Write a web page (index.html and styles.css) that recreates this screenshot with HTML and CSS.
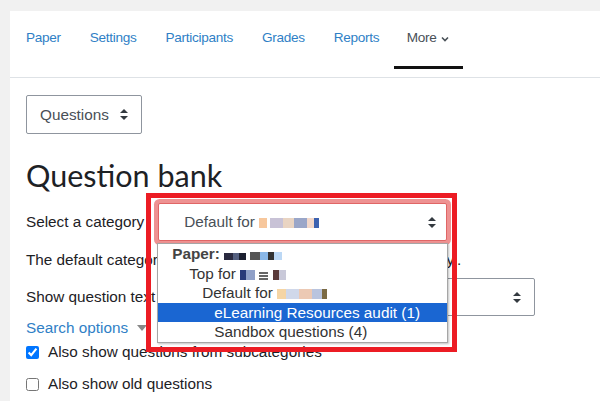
FILE: index.html
```html
<!DOCTYPE html>
<html lang="en">
<head>
  <meta charset="UTF-8">
  <title>Question bank</title>
  <link rel="stylesheet" href="styles.css">
</head>
<body>
  <div class="page">
    <nav class="tabs">
      <a class="tab" href="#">Paper</a>
      <a class="tab" href="#">Settings</a>
      <a class="tab" href="#">Participants</a>
      <a class="tab" href="#">Grades</a>
      <a class="tab" href="#">Reports</a>
      <a class="tab active" href="#">More
        <svg class="chev" width="8" height="6" viewBox="0 0 8 6"><path d="M1 1.5 L4 4.5 L7 1.5" fill="none" stroke="#495057" stroke-width="1.6"/></svg>
      </a>
    </nav>

    <div class="content">
      <div class="select jump">
        <span>Questions</span>
        <svg class="updown" width="8" height="11" viewBox="0 0 8 11"><path d="M4 0 L8 4 L0 4 Z M4 11 L8 7 L0 7 Z" fill="#343a40"/></svg>
      </div>

      <h2 class="title">Question bank</h2>

      <div class="row">
        <label class="label">Select a category</label>
        <div class="cat-wrap">
          <div class="select cat">
            <span>Default for <span class="blur b-sel"></span></span>
            <svg class="updown" width="8" height="11" viewBox="0 0 8 11"><path d="M4 0 L8 4 L0 4 Z M4 11 L8 7 L0 7 Z" fill="#343a40"/></svg>
          </div>
          <ul class="menu">
            <li class="group">Paper: <span class="blur b-p1"></span> <span class="blur b-p2"></span></li>
            <li class="lvl1">Top for <span class="blur b-t1"></span> <span class="blur b-t2"></span> <span class="blur b-t3"></span></li>
            <li class="lvl2">Default for <span class="blur b-d1"></span></li>
            <li class="lvl3 picked">eLearning Resources audit (1)</li>
            <li class="lvl3">Sandbox questions (4)</li>
          </ul>
          <div class="highlight"></div>
        </div>
      </div>

      <p class="note">The default category for questions shared in context 'Lewsandy'.</p>

      <div class="row show-row">
        <label class="label">Show question text in the question list</label>
        <div class="select show">
          <span>No</span>
          <svg class="updown" width="8" height="11" viewBox="0 0 8 11"><path d="M4 0 L8 4 L0 4 Z M4 11 L8 7 L0 7 Z" fill="#343a40"/></svg>
        </div>
      </div>

      <a class="search" href="#">Search options <span class="caret"></span></a>

      <label class="check first"><input type="checkbox" checked> Also show questions from subcategories</label>
      <label class="check"><input type="checkbox"> Also show old questions</label>
    </div>
  </div>
</body>
</html>
```

FILE: styles.css
```css
body {
  margin: 0;
  background-color: #f1f1f1;
  font-family: 'Liberation Sans', Arial, sans-serif;
  font-size: 15.3px;
  color: #1d2125;
  height: 401px;
  overflow: hidden;
}
.page {
  margin: 11px 0 0 10px;
  background: #fff;
  min-height: 390px;
}
.tabs {
  display: flex;
  padding: 0 0 8px 1.5px;
  border-bottom: 1px solid #dee2e6;
}
.tab {
  display: flex;
  align-items: center;
  gap: 4px;
  padding: 17px 14.5px 18px;
  line-height: 20px;
  font-size: 13.6px;
  letter-spacing: -0.3px;
  color: #2f7fc6;
  text-decoration: none;
  border-bottom: 3px solid transparent;
}
.tab.active {
  color: #495057;
  border-bottom-color: #111;
  padding-left: 13px;
  padding-right: 14px;
}
.chev {
  margin-top: 2px;
}
.content {
  padding: 17px 16px 0;
  display: flex;
  flex-direction: column;
  align-items: flex-start;
}
.select {
  display: flex;
  align-items: center;
  justify-content: space-between;
  box-sizing: border-box;
  border: 1px solid #8f959e;
  border-radius: 2px;
  background: #fff;
  color: #495057;
  padding: 0 13px;
}
.jump {
  width: 116px;
  height: 39px;
}
.title {
  font-family: Lato, 'Liberation Sans', sans-serif;
  font-weight: 400;
  font-size: 30.5px;
  line-height: 36px;
  margin: 23px 0 0;
  color: #1d2125;
}
.row {
  display: flex;
  align-items: center;
  gap: 14px;
  margin-top: 10px;
}
.cat-wrap {
  position: relative;
}
.cat {
  width: 289px;
  height: 38px;
  padding: 0 10px 0 25px;
  border-color: #e06666;
  box-shadow: 0 0 0 4px rgba(232, 110, 110, 0.75);
}
.blur {
  display: inline-block;
  height: 10px;
  vertical-align: -1px;
  filter: blur(0.5px);
}
.b-sel {
  width: 60px;
  background: linear-gradient(90deg, #f7c79c 0 14%, #fff 14% 18%, #c8c2d6 18% 40%, #e9d4c2 40% 58%, #9aa6c8 58% 80%, #f2d7c9 80% 92%, #3d62b0 92%);
}
.menu {
  position: absolute;
  left: -1px;
  top: 40px;
  width: 291px;
  height: 100px;
  box-sizing: border-box;
  margin: 0;
  padding: 0;
  list-style: none;
  background: #fff;
  border: 1px solid #a6a6a6;
  box-shadow: 1px 1px 2px rgba(0, 0, 0, 0.25);
  color: #333;
  z-index: 2;
}
.menu li {
  height: 19.5px;
  line-height: 19.5px;
  white-space: nowrap;
}
.menu .group {
  font-weight: bold;
  padding-left: 14px;
  color: #444;
}
.menu .lvl1 {
  padding-left: 31px;
}
.menu .lvl2 {
  padding-left: 44px;
}
.menu .lvl3 {
  padding-left: 56px;
}
.menu .picked {
  background: #1a66d2;
  color: #fff;
}
.b-p1 {
  width: 22px;
  background: linear-gradient(90deg, #2a2a40 0 40%, #556080 40% 70%, #1c2030 70%);
  height: 7px;
}
.b-p2 {
  width: 32px;
  height: 8px;
  background: linear-gradient(90deg, #555 0 30%, #8ab8e8 30% 55%, #333 55% 75%, #bcd8f5 75%);
}
.b-t1 {
  width: 15px;
  background: linear-gradient(90deg, #283a7a 0 40%, #8fa0c8 40%);
}
.b-t2 {
  width: 9px;
  height: 8px;
  background: repeating-linear-gradient(180deg, #666 0 2px, #fff 2px 3px);
}
.b-t3 {
  width: 13px;
  background: linear-gradient(90deg, #5a3a3a 0 45%, #c9c9d9 45%);
}
.b-d1 {
  width: 50px;
  background: linear-gradient(90deg, #f5d5a5 0 18%, #d0d8ea 18% 45%, #ecc9b4 45% 70%, #b9c4de 70% 90%, #7b6a44 90%);
}
.highlight {
  position: absolute;
  left: -12px;
  top: -10px;
  width: 311px;
  height: 159px;
  box-sizing: border-box;
  border: 5px solid #ec1c24;
  z-index: 3;
  pointer-events: none;
}
.note {
  margin: 8px 0 0;
  line-height: 22px;
  white-space: nowrap;
}
.show-row {
  margin-top: 7px;
  width: 509px;
  justify-content: space-between;
}
.show {
  width: 200px;
  height: 38px;
  padding-right: 13px;
}
.search {
  margin-top: 1px;
  line-height: 22px;
  color: #2f7fc6;
  text-decoration: none;
}
.caret {
  display: inline-block;
  width: 0;
  height: 0;
  margin-left: 5px;
  border-left: 5px solid transparent;
  border-right: 5px solid transparent;
  border-top: 6px solid #888;
  vertical-align: 2px;
}
.check {
  display: flex;
  align-items: center;
  gap: 9px;
  line-height: 22px;
  margin-top: 2px;
}
.check + .check {
  margin-top: 10px;
}
.check input {
  margin: 0;
  width: 13px;
  height: 13px;
}
```
